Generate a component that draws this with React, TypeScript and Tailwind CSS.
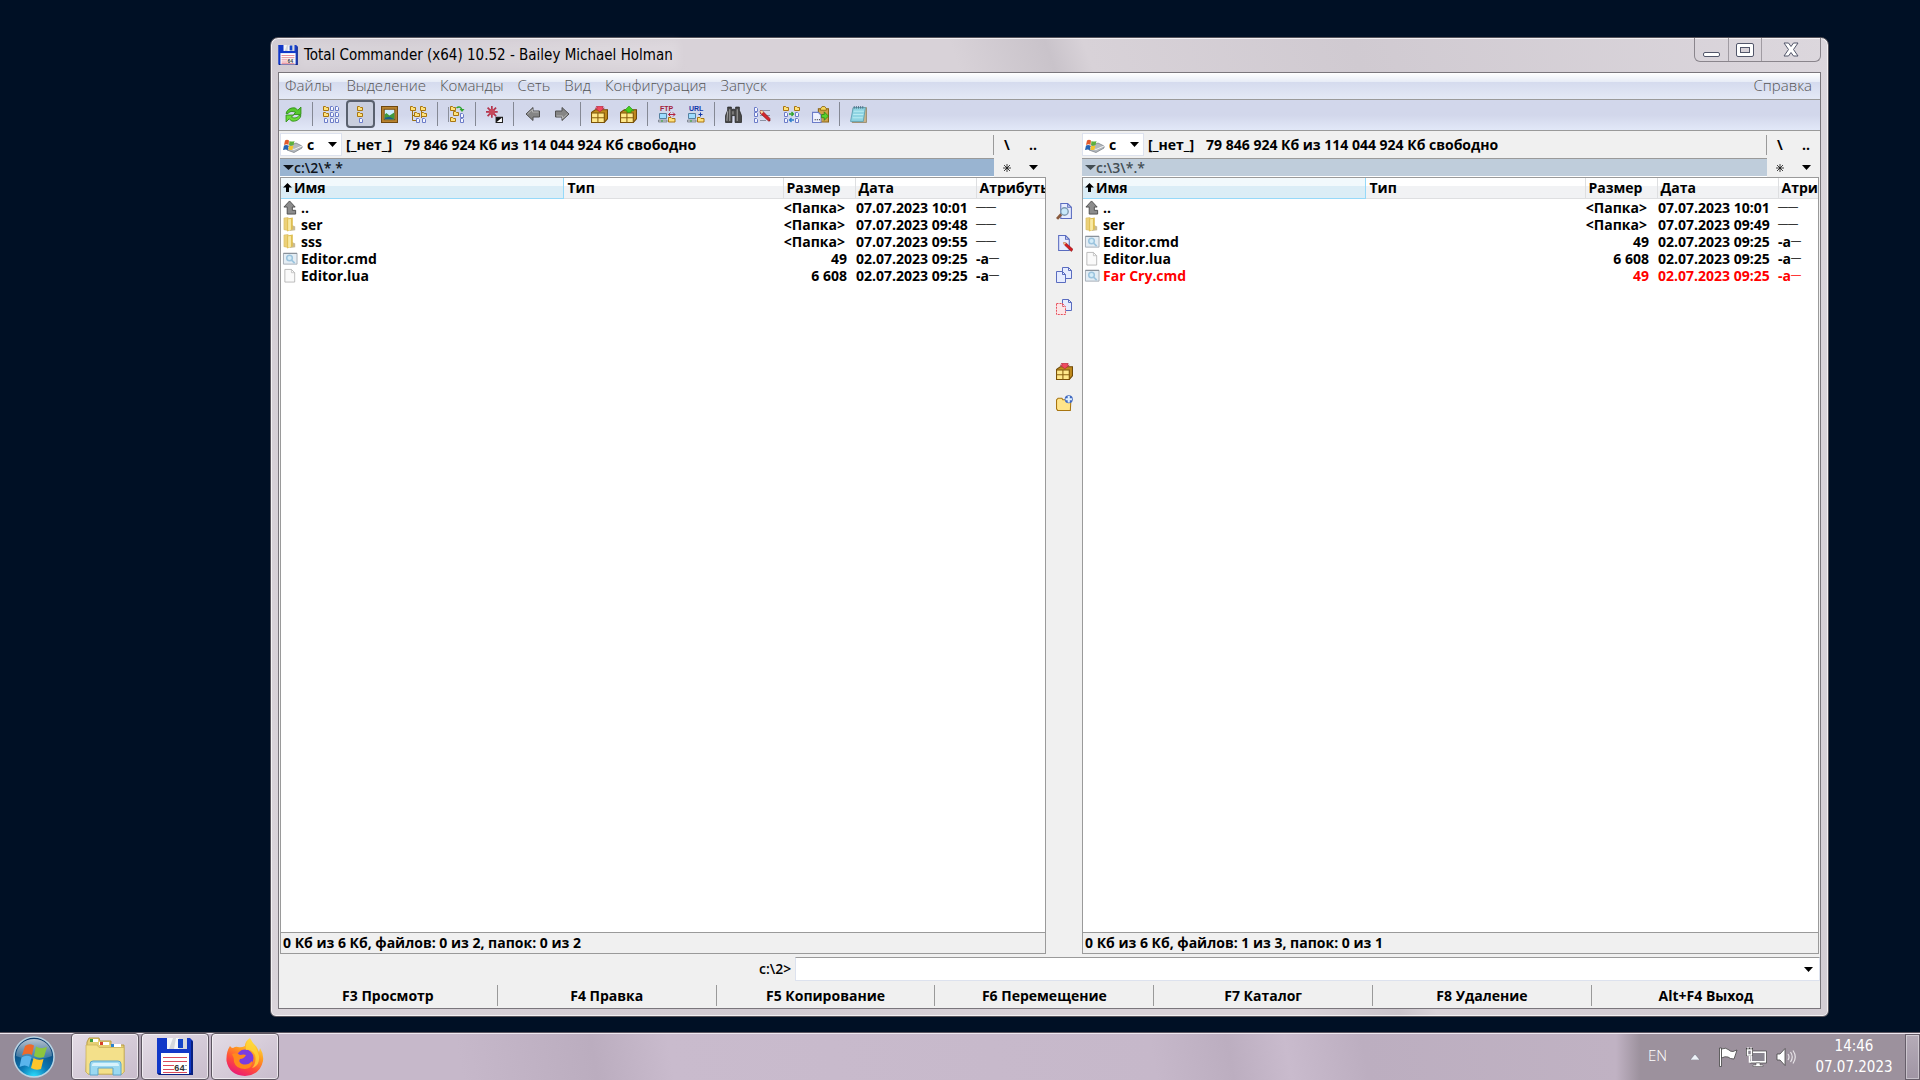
import type { ReactNode } from "react";

type FileRow = {
  icon: "up" | "folder" | "cmd" | "file";
  name: string;
  size: string;
  date: string;
  archive?: boolean;
  selected?: boolean;
};

const leftFiles: FileRow[] = [
  { icon: "up", name: "..", size: "<Папка>", date: "07.07.2023 10:01" },
  { icon: "folder", name: "ser", size: "<Папка>", date: "07.07.2023 09:48" },
  { icon: "folder", name: "sss", size: "<Папка>", date: "07.07.2023 09:55" },
  { icon: "cmd", name: "Editor.cmd", size: "49", date: "02.07.2023 09:25", archive: true },
  { icon: "file", name: "Editor.lua", size: "6 608", date: "02.07.2023 09:25", archive: true },
];

const rightFiles: FileRow[] = [
  { icon: "up", name: "..", size: "<Папка>", date: "07.07.2023 10:01" },
  { icon: "folder", name: "ser", size: "<Папка>", date: "07.07.2023 09:49" },
  { icon: "cmd", name: "Editor.cmd", size: "49", date: "02.07.2023 09:25", archive: true },
  { icon: "file", name: "Editor.lua", size: "6 608", date: "02.07.2023 09:25", archive: true },
  { icon: "cmd", name: "Far Cry.cmd", size: "49", date: "02.07.2023 09:25", archive: true, selected: true },
];

const menuItems = ["Файлы", "Выделение", "Команды", "Сеть", "Вид", "Конфигурация", "Запуск"];

const functionKeys = [
  "F3 Просмотр",
  "F4 Правка",
  "F5 Копирование",
  "F6 Перемещение",
  "F7 Каталог",
  "F8 Удаление",
  "Alt+F4 Выход",
];

const Svg = ({ children, className = "size-4", box = "0 0 16 16" }: { children: ReactNode; className?: string; box?: string }) => (
  <svg viewBox={box} className={`${className} shrink-0`} fill="none" aria-hidden="true">
    {children}
  </svg>
);

const Floppy = ({ className }: { className: string }) => (
  <Svg className={className} box="0 0 36 37">
    <path d="M0 0H33L36 3V37H2L0 35Z" fill="#1238c8" />
    <path d="M0 35L2 37H36V4L34 2V35Z" fill="#0a2080" />
    <path d="M10 0H30V11H10Z" fill="#d5d7dc" />
    <path d="M10 0H16L12 11H10ZM19 0H22V11H17Z" fill="#f5f6f8" />
    <path d="M21 1H26V10H21Z" fill="#1444c8" />
    <path d="M4 15H32V36H4Z" fill="#fff" />
    <path d="M6 19.500H30M6 23.500H30M6 27.500H17M6 31.500H17M6 34.500H30" stroke="#d94a5c" strokeWidth="1.200" />
    <text x="17" y="33" fontSize="9" fontWeight="700" fontFamily="Liberation Mono, monospace" fill="#333">64</text>
    <path d="M29 27V28M29 31V32" stroke="#333" strokeWidth="1" />
  </Svg>
);

// little folder and page glyphs shared by the toolbar icons
const F = ({ x, y }: { x: number; y: number }) => (
  <path d={`M${x} ${y}h2l1 1h2v3h-5z`} fill="#ffe27a" stroke="#a87510" />
);
const P = ({ x, y }: { x: number; y: number }) => (
  <path d={`M${x} ${y}h2l1 1v3h-3z`} fill="#f4f6ff" stroke="#6c7cc8" />
);

const RefreshIcon = () => (
  <Svg className="size-[17px]">
    <path d="M1 7C2 3 6 1 10 2L12 4L15 1V8H8L10 6C7 4.500 4 5 3 7Z" fill="#55c82c" stroke="#2c8a14" strokeWidth=".8" />
    <path d="M15 9C14 13 10 15 6 14L4 12L1 15V8.500H8L6 10.500C9 12 12 11 13 9Z" fill="#6bdc38" stroke="#2c8a14" strokeWidth=".8" />
  </Svg>
);
const BriefIcon = () => (
  <Svg className="size-[17px]" box="0 0 17 17">
    <F x={0.5} y={0.5} />
    <F x={0.5} y={6.5} />
    <P x={1.5} y={12.5} />
    <P x={7.5} y={0.5} /><P x={7.5} y={6.5} /><P x={7.5} y={12.5} />
    <P x={12.5} y={0.5} /><P x={12.5} y={6.5} /><P x={12.5} y={12.5} />
  </Svg>
);
const FullIcon = () => (
  <Svg className="size-[17px]" box="0 0 17 17">
    <F x={5.5} y={0.5} />
    <F x={5.5} y={6.5} />
    <P x={7.5} y={12.5} />
  </Svg>
);
const ThumbsIcon = () => (
  <Svg className="size-[17px]">
    <path d="M.5 .5H15.500V15.500H.5Z" fill="#b98430" stroke="#6f4810" />
    <path d="M3 3H13V13H3Z" fill="#cdeeff" stroke="#7d5214" />
    <path d="M3.500 8L5 6.500L8 9L12.500 6V12.500H3.500Z" fill="#3f9a3c" />
    <path d="M3.500 11L8 10L12.500 12.500H3.500Z" fill="#1a5f8c" />
  </Svg>
);
const TreeIcon = () => (
  <Svg className="size-[17px]" box="0 0 17 17">
    <path d="M2.500 4V14.500H6M11.500 4V12M2.500 9.500H6" stroke="#9a7010" />
    <F x={0.5} y={0.5} />
    <F x={10.5} y={0.5} />
    <F x={4.5} y={6.5} />
    <F x={11.5} y={6.5} />
    <P x={6.5} y={12.5} />
    <P x={12.5} y={12.5} />
  </Svg>
);
const BranchIcon = () => (
  <Svg className="size-[17px]" box="0 0 17 17">
    <path d="M.5 1V16" stroke="#8a8f9c" />
    <F x={2.5} y={0.5} />
    <F x={5.5} y={5.5} />
    <F x={2.5} y={11.5} />
    <P x={12.5} y={7.5} /><P x={12.5} y={12.5} />
    <path d="M8.500 2C11 0 13 1 14 4" stroke="#2fa32c" strokeWidth="1.500" />
    <path d="M11.500 3H16.500L14 6Z" fill="#2fa32c" />
  </Svg>
);
const SelectIcon = () => (
  <Svg className="size-[17px]">
    <path d="M5.500 0V11M0 5.500H11M1.500 1.500L9.500 9.500M9.500 1.500L1.500 9.500" stroke="#b4344c" strokeWidth="1.600" />
    <circle cx="5.500" cy="5.500" r="3" fill="#c4485c" />
    <path d="M9.500 10.500H15.500V15.500H9.500Z" fill="#fff" stroke="#222" />
    <path d="M9.500 15.500V10.500H15.500Z" fill="#111" />
  </Svg>
);
const BackIcon = ({ flip = false }) => (
  <Svg className={flip ? "size-4 rotate-180" : "size-4"}>
    <path d="M1 8L8 1.500V5H14.500V11H8V14.500Z" fill="#858585" stroke="#505050" />
    <path d="M2.500 8L7.500 3.500V6H13.500" stroke="#b4b4b4" />
  </Svg>
);
const PackIcon = ({ up = false }) => (
  <Svg className="size-[17px]">
    <path d="M.5 6L4 3.500H15.500V12L12.500 15.500H.5Z" fill="#c08a1c" stroke="#6f4a08" />
    <path d="M.5 6.500H12.500V15.500H.5Z" fill="#ffe88a" stroke="#7a5208" />
    <path d="M6.500 6.500V15.500M.5 11H12.500" stroke="#8a6010" />
    {up ? (
      <path d="M4 4.500L8.500 0L13 4.500H10.500V6H6.500V4.500Z" fill="#44d020" stroke="#2a8c12" strokeWidth=".6" />
    ) : (
      <path d="M5 .3H11.500L10.500 2H12.500L8.300 5.500L4 2H6Z" fill="#f04a5e" stroke="#b0203a" strokeWidth=".6" />
    )}
  </Svg>
);
const NetIcon = ({ label }: { label: string }) => (
  <Svg className="size-[18px]" box="0 0 18 18">
    <text x="2" y="6" fontSize="7" fontWeight="700" fontFamily="Liberation Sans, sans-serif" fill={label === "FTP" ? "#a3203c" : "#1238a8"}>
      {label}
    </text>
    <path d="M1.500 8.500H8.500V13.500H1.500Z" fill="#9fdcff" stroke="#5580a0" />
    <path d="M.5 15H9V17H.5Z" fill="#c9ced6" stroke="#68707c" strokeWidth=".7" />
    <path d="M3 16H5" stroke="#2fa32c" />
    <path d="M10.500 12.500H13L14 13.500H17V17H10.500Z" fill="#ffe07a" stroke="#a87510" />
    {label === "FTP" ? (
      <path d="M10.500 9.500H17M12.500 7.500L10.500 9.500L12.500 11.500M15 7.500L17 9.500L15 11.500" stroke="#b4203c" />
    ) : (
      <path d="M13.500 7.500V11.500M11.500 9.500H15.500" stroke="#1238a8" />
    )}
  </Svg>
);
const BinocularsIcon = () => (
  <Svg className="size-[17px]">
    <path d="M2.500 1H6V4H7V3H9V4H10V1H13.500V4L15.500 9V15.500H9.500V9H6.500V15.500H.5V9L2.500 4Z" fill="#4a4a4a" stroke="#222" strokeWidth=".7" />
    <path d="M2.500 5L1.800 14M4.500 3V14M11.500 3V14M7.500 5V8" stroke="#a0a0a0" />
  </Svg>
);
const RenameIcon = () => (
  <Svg className="size-[17px]" box="0 0 17 17">
    <P x={0.5} y={1.5} /><P x={0.5} y={6.5} /><P x={0.5} y={12.5} />
    <path d="M6 4.500H16M6 9.500H16M6 14.500H12" stroke="#8c93a4" />
    <path d="M6 5L8 4.500L16 12.500V15H14.500L6.500 7.500Z" fill="#d3262c" stroke="#7a1010" strokeWidth=".6" />
    <path d="M6 5L8 4.500L9.500 6L7.500 8Z" fill="#f3d9a0" />
  </Svg>
);
const SyncIcon = () => (
  <Svg className="size-[17px]" box="0 0 17 17">
    <F x={0.5} y={0.5} /><F x={11.5} y={0.5} />
    <P x={1.5} y={6.5} /><P x={12.5} y={6.5} />
    <P x={1.5} y={12.5} /><P x={12.5} y={12.5} />
    <path d="M6 8H10.500M8.500 6L10.500 8L8.500 10" stroke="#2fa32c" strokeWidth="1.300" />
    <path d="M11 14H6.500M8.500 12L6.500 14L8.500 16" stroke="#2c7ccc" strokeWidth="1.300" />
  </Svg>
);
const CopyNamesIcon = () => (
  <Svg className="size-[17px]">
    <path d="M6 2.500H15.500V15H6Z" fill="#cfa24a" stroke="#8a6414" />
    <path d="M8 2.500L9.500 .5H12L13.500 2.500V4H8Z" fill="#f4d75c" stroke="#8a6414" strokeWidth=".8" />
    <path d="M.5 6H6L8.500 8.500V15.500H.5Z" fill="#eef1ff" stroke="#6c7cc8" />
    <path d="M2.500 13H3.500M4.500 13H5.500M6.500 13H7.500" stroke="#222" />
    <path d="M9 8H11.500V5.500L15.500 9.500L11.500 13.500V11H9Z" fill="#58d22c" stroke="#2a8012" strokeWidth=".7" />
  </Svg>
);
const NotepadIcon = () => (
  <Svg className="size-[17px]">
    <path d="M3 2L15.500 1.500V15.500H2Z" fill="#c8b48a" stroke="#8c7c5a" strokeWidth=".7" />
    <path d="M3 1.500H14.500L12.500 14.500H.5Z" fill="#8fd4e2" stroke="#5a9fb2" strokeWidth=".8" />
    <path d="M3.500 5H13M3 8H12.500M2.500 11H12" stroke="#b8ebf2" />
    <path d="M4 0V2.500M6 0V2.500M8 0V2.500M10 0V2.500M12 0V2.500" stroke="#4a6a80" strokeWidth=".8" />
  </Svg>
);

const ViewIcon = () => (
  <Svg className="size-[17px]">
    <path d="M4.500 .5H11L14.500 4V14.500H4.500ZM11 .5V4H14.500" fill="#e6ecff" stroke="#5a6cc0" />
    <path d="M5 10.500L1 15" stroke="#8a5a3c" strokeWidth="2.600" />
    <circle cx="8" cy="8" r="3.500" fill="#c8e8fa" stroke="#7e9ab0" strokeWidth="1.300" />
  </Svg>
);
const EditIcon = () => (
  <Svg className="size-[17px]">
    <path d="M2.500 .5H9L12.500 4V14.500H2.500ZM9 .5V4H12.500" fill="#e6ecff" stroke="#5a6cc0" />
    <path d="M7 7L9.500 7.500L16 13.500L14.500 15.500L8 9.500Z" fill="#d31a20" stroke="#7a1010" strokeWidth=".5" />
    <path d="M6.500 6.500L9.500 7.500L8 9.500Z" fill="#f3c78a" />
  </Svg>
);
const CopyIcon = ({ move = false }) => (
  <Svg className="size-[17px]" box="0 0 17 17">
    <path d="M6.500 .5H12.500L15.500 3.500V11.500H6.500ZM12.500 .5V3.500H15.500" fill="#e6ecff" stroke="#5a6cc0" />
    <path
      d="M.5 4.500H6.500L9.500 7.500V15.500H.5ZM6.500 4.500V7.500H9.500"
      fill={move ? "#fbe6e8" : "#e6ecff"}
      stroke={move ? "#e8505c" : "#5a6cc0"}
      strokeDasharray={move ? "2 1" : undefined}
    />
  </Svg>
);
const NewFolderIcon = () => (
  <Svg className="size-[17px]">
    <path d="M.5 4.500L2 3H5.500L6.500 4.500H14L13.500 14.500H1.500L.5 13Z" fill="#ffe48a" stroke="#a87510" />
    <circle cx="12" cy="4" r="3.800" fill="#3f68c0" />
    <path d="M12 1V7M9 4H15" stroke="#dff0ff" strokeWidth="2" />
  </Svg>
);

const FileIcon = ({ kind }: { kind: FileRow["icon"] }) => {
  if (kind === "up")
    return (
      <Svg className="h-[15px] w-4">
        <path d="M1.500 7.500L7.500 1L13.500 7.500H10.500V11H14V15H5V7.500Z" fill="#8c8c8c" stroke="#4c4c4c" />
      </Svg>
    );
  if (kind === "folder")
    return (
      <Svg className="h-[15px] w-4">
        <path d="M9 8L13.500 10V14L8 15Z" fill="#c9bb94" />
        <path d="M1.500 1L6 .5V14.500L1.500 13.500Z" fill="#ecd078" stroke="#cdb25a" strokeWidth=".5" />
        <path d="M5 1.500L11 .5V13L5 15.500Z" fill="#dfbf52" />
        <path d="M6 2.500L9 2V13.500L6 14.500Z" fill="#f8e9a4" />
      </Svg>
    );
  if (kind === "cmd")
    return (
      <Svg className="h-[15px] w-4">
        <path d="M1 2.500H15.500V14H1Z" fill="#e4edf4" stroke="#a4acb4" />
        <path d="M1 2.500H15.500" stroke="#7e8890" />
        <circle cx="7.500" cy="7.500" r="3" fill="#d4ecf8" stroke="#9cc4de" strokeWidth="1.600" />
        <path d="M10 10L13 13" stroke="#9cc4de" strokeWidth="1.800" />
      </Svg>
    );
  return (
    <Svg className="h-[15px] w-4">
      <path d="M2.500 1.500H9.500L13 5V15H2.500Z" fill="#fafafa" stroke="#a8a8a8" strokeWidth=".8" />
      <path d="M9.500 1.500V5H13" stroke="#b8b8b8" strokeWidth=".8" />
    </Svg>
  );
};

const DownArrow = ({ className = "w-[9px]" }) => (
  <svg viewBox="0 0 9 5" preserveAspectRatio="none" className={`${className} h-[5px] shrink-0`} aria-hidden="true">
    <path d="M0 0H9L4.500 5Z" fill="currentColor" />
  </svg>
);

const ToolButton = ({ label, pressed = false, children }: { label: string; pressed?: boolean; children: ReactNode }) => (
  <button
    type="button"
    aria-label={label}
    className={`flex h-7 w-[29px] shrink-0 items-center justify-center ${
      pressed ? "rounded-sm border-2 border-[#59606e] bg-[#c9cede]" : ""
    }`}
  >
    {children}
  </button>
);

const Separator = () => <span className="mx-1 h-6 w-px shrink-0 bg-[#848894]" />;

const Toolbar = () => (
  <div className="flex h-[31px] shrink-0 items-center border-b border-[#9a9a9a] bg-linear-to-b from-[#d2d7eb] from-50% to-[#e2e8f8] pb-0.5">
    <ToolButton label="Обновить"><RefreshIcon /></ToolButton>
    <Separator />
    <ToolButton label="Краткий"><BriefIcon /></ToolButton>
    <ToolButton label="Подробный" pressed><FullIcon /></ToolButton>
    <ToolButton label="Эскизы"><ThumbsIcon /></ToolButton>
    <ToolButton label="Дерево"><TreeIcon /></ToolButton>
    <Separator />
    <ToolButton label="Все файлы"><BranchIcon /></ToolButton>
    <Separator />
    <ToolButton label="Инвертировать выделение"><SelectIcon /></ToolButton>
    <Separator />
    <ToolButton label="Назад"><BackIcon /></ToolButton>
    <ToolButton label="Вперёд"><BackIcon flip /></ToolButton>
    <Separator />
    <ToolButton label="Упаковать"><PackIcon /></ToolButton>
    <ToolButton label="Распаковать"><PackIcon up /></ToolButton>
    <Separator />
    <ToolButton label="Соединиться с FTP"><NetIcon label="FTP" /></ToolButton>
    <ToolButton label="Новое соединение"><NetIcon label="URL" /></ToolButton>
    <Separator />
    <ToolButton label="Поиск"><BinocularsIcon /></ToolButton>
    <ToolButton label="Групповое переименование"><RenameIcon /></ToolButton>
    <ToolButton label="Синхронизация"><SyncIcon /></ToolButton>
    <ToolButton label="Копировать имена"><CopyNamesIcon /></ToolButton>
    <Separator />
    <ToolButton label="Блокнот"><NotepadIcon /></ToolButton>
  </div>
);

const Attributes = ({ archive = false }) => (
  <span className="flex h-[17px] items-center">
    {archive ? "-a" : null}
    <span className="font-['Liberation_Sans',sans-serif] text-[10px] leading-none font-normal">{archive ? "—" : "——"}</span>
  </span>
);

type PanelProps = {
  id: string;
  path: string;
  files: FileRow[];
  status: string;
  active?: boolean;
};

const FilePanel = ({ id, path, files, status, active = false }: PanelProps) => (
  <section className="flex min-w-0 flex-col">
    <div className="flex h-[27px] shrink-0 items-center">
      <div className="flex h-[23px] w-[62px] shrink-0 items-center border border-[#dde2ee] bg-white pr-1 pl-0.5">
        <Svg className="h-4 w-[20px]" box="0 0 20 16">
          <path d="M4 10L13 6L19 9V11L11 15.500L4 13Z" fill="#b4b9be" stroke="#7e848a" strokeWidth=".8" />
          <path d="M4 10L11 12.500L19 9" stroke="#f2f2f2" />
          <path d="M2 3.500Q4 2 6 3.500L5.500 8Q4 6.500 1 8Z" fill="#e05a2c" />
          <path d="M6.500 4Q9 5 11.500 4L10.500 8Q8 9 6 8Z" fill="#5cb03c" />
          <path d="M1 8.500Q3 7.500 5.500 8.500L5 13Q3 12 0 13Z" fill="#2464b4" />
          <path d="M6 8.500Q8 9.500 10.500 8.500L9.500 12.500Q7 13.500 5.500 12.500Z" fill="#f3c430" />
        </Svg>
        <select id={`${id}-drive`} aria-label="Диск" defaultValue="c" className="h-5 min-w-0 flex-1 appearance-none bg-transparent pl-1 leading-5 font-bold outline-none">
          <option value="c">c</option>
        </select>
        <DownArrow />
      </div>
      <p className="ml-1 flex flex-1 gap-3 whitespace-nowrap">
        <span>[_нет_]</span>
        <span>79 846 924 Кб из 114 044 924 Кб свободно</span>
      </p>
      <div className="flex h-5 w-[53px] shrink-0 border-l border-[#9a9a9a] leading-5">
        <button type="button" className="flex-1">\</button>
        <button type="button" className="flex-1">..</button>
      </div>
    </div>
    <div className="flex h-[19px] shrink-0 items-center">
      <button
        type="button"
        className={`flex h-full min-w-0 flex-1 items-center border-t border-b border-t-[#9a9a9a] border-b-white pl-[3px] text-left leading-4 ${
          active ? "bg-[#99b4d1] text-[#10151c]" : "bg-[#bfcddb] text-[#434e54]"
        }`}
      >
        <DownArrow className="w-[11px]" />
        <span className="font-semibold">{path}</span>
      </button>
      <div className="flex w-[52px] shrink-0 items-center">
        <button type="button" aria-label="Избранные каталоги" className="flex flex-1 justify-center">
          <Svg className="size-2" box="0 0 8 8">
            <path d="M4 0V8M0 4H8M1 1L7 7M7 1L1 7" stroke="#111" strokeWidth=".8" />
          </Svg>
        </button>
        <button type="button" aria-label="История каталогов" className="flex flex-1 justify-center">
          <DownArrow />
        </button>
      </div>
    </div>
    <div className="flex min-h-0 flex-1 flex-col border border-[#9a9a9a] bg-white">
      <div className="min-h-0 flex-1 overflow-hidden">
        <table className="w-full table-fixed border-collapse">
          <colgroup>
            <col className="w-[282px]" />
            <col className="w-[220px]" />
            <col className="w-[72px]" />
            <col className="w-[121px]" />
            <col />
          </colgroup>
          <thead>
            <tr className="h-5 bg-linear-to-b from-white from-40% to-[#f1f2f4] to-40% text-left leading-[18px]">
              <th className="border-r border-b border-[#96d9f9] bg-linear-to-b from-[#f2f9fc] from-40% to-[#dbedf6] to-40% p-0">
                <span className="flex items-center pl-0.5">
                  <Svg className="mr-0.5 size-[9px]" box="0 0 9 9">
                    <path d="M4.500 0L9 4.500H6V9H3V4.500H0Z" fill="#000" />
                  </Svg>
                  Имя
                </span>
              </th>
              <th className="border-r border-b border-[#dedfe1] p-0 pl-1">Тип</th>
              <th className="border-r border-b border-[#dedfe1] p-0 pl-[3px]">Размер</th>
              <th className="border-r border-b border-[#dedfe1] p-0 pl-[3px]">Дата</th>
              <th className="overflow-hidden border-b border-[#dedfe1] p-0 pl-[3px]">Атрибуты</th>
            </tr>
          </thead>
          <tbody>
            {files.map((file) => (
              <tr key={file.name} className={`h-[17px] leading-[17px] ${file.selected ? "text-[#ff0000]" : ""}`}>
                <td className="p-0">
                  <span className="flex h-[17px] items-center gap-[3px] pl-px">
                    <FileIcon kind={file.icon} />
                    {file.name}
                  </span>
                </td>
                <td className="p-0" />
                <td className={`p-0 text-right ${file.icon === "up" || file.icon === "folder" ? "pr-2.5" : "pr-2"}`}>{file.size}</td>
                <td className="p-0 pl-px">{file.date}</td>
                <td className="p-0 whitespace-nowrap">
                  <Attributes archive={file.archive} />
                </td>
              </tr>
            ))}
          </tbody>
        </table>
      </div>
      <p className="h-[21px] shrink-0 truncate border-t border-[#9a9a9a] bg-[#f0f0f0] pl-0.5 leading-[19px]">{status}</p>
    </div>
  </section>
);

const SideBar = () => (
  <nav className="flex flex-col items-center pt-16">
    {[
      { label: "Просмотр", icon: <ViewIcon /> },
      { label: "Правка", icon: <EditIcon /> },
      { label: "Копирование", icon: <CopyIcon /> },
      { label: "Перемещение", icon: <CopyIcon move /> },
      null,
      { label: "Упаковать", icon: <PackIcon /> },
      { label: "Каталог", icon: <NewFolderIcon /> },
    ].map((item, i) =>
      item ? (
        <button key={i} type="button" aria-label={item.label} className="flex size-8 items-center justify-center">
          {item.icon}
        </button>
      ) : (
        <span key={i} className="h-8" />
      )
    )}
  </nav>
);

const TitleBar = () => (
  <header className="flex h-[34px] shrink-0 items-start justify-between">
    <div className="flex h-[34px] items-center gap-1.5">
      <Floppy className="h-5 w-5" />
      <h1 className="bg-white/15 font-['DejaVu_Sans_Condensed','DejaVu_Sans',sans-serif] text-[15px] leading-4 font-normal text-black shadow-[0_0_8px_6px_rgba(255,255,255,0.15)]">
        Total Commander (x64) 10.52 - Bailey Michael Holman
      </h1>
    </div>
    <div className="flex h-6 overflow-hidden rounded-b-md border border-t-0 border-[#8a858c]">
      <button type="button" aria-label="Свернуть" className="flex w-[34px] items-end justify-center border-r border-[#a09ba2] pb-1">
        <span className="h-[5px] w-[17px] rounded-xs border border-[#52566a] bg-white" />
      </button>
      <button type="button" aria-label="Развернуть" className="flex w-[33px] items-center justify-center border-r border-[#a09ba2]">
        <span className="flex h-[14px] w-[18px] items-center justify-center rounded-xs border border-[#52566a] bg-white">
          <span className="h-1.5 w-2.5 border border-[#52566a] bg-[#d8d2d8]" />
        </span>
      </button>
      <button type="button" aria-label="Закрыть" className="flex w-[58px] items-center justify-center">
        <Svg className="h-[15px] w-4" box="0 0 16 15">
          <path d="M1 1H5.500L8 4.500L10.500 1H15L10.500 7.500L15 14H10.500L8 10.500L5.500 14H1L5.500 7.500Z" fill="#fff" stroke="#52566a" strokeLinejoin="round" />
        </Svg>
      </button>
    </div>
  </header>
);

const MenuBar = () => (
  <nav className="flex h-[27px] shrink-0 items-center gap-3.5 border-b border-[#9a9a9a] bg-[linear-gradient(#ffffff,#e6ebf6_36%,#d5dbee_36%,#e4e9f6)] px-1.5 font-['Open_Sans',sans-serif] text-[15px] font-light text-[#555]">
    {menuItems.map((item) => (
      <button key={item} type="button">{item}</button>
    ))}
    <button type="button" className="mr-0.5 ml-auto">Справка</button>
  </nav>
);

const StartOrb = () => (
  <Svg className="size-[42px]" box="0 0 42 42">
    <defs>
      <radialGradient id="orb" cx=".5" cy="1" r=".9">
        <stop offset="0" stopColor="#2ce0ff" />
        <stop offset=".4" stopColor="#0c78b4" />
        <stop offset="1" stopColor="#0c3c6c" />
      </radialGradient>
      <linearGradient id="shine" x1="0" y1="0" x2="0" y2="1">
        <stop offset="0" stopColor="#fff" stopOpacity=".7" />
        <stop offset="1" stopColor="#fff" stopOpacity=".15" />
      </linearGradient>
    </defs>
    <circle cx="21" cy="21" r="20" fill="url(#orb)" stroke="#b8d4e4" strokeWidth="1.500" />
    <path d="M3 20C3 10 11 3 21 3S39 10 39 20C30 24 12 24 3 20Z" fill="url(#shine)" />
    <path d="M12 10Q16 7 21 9.500L19 19Q14 16.500 9 19.500Z" fill="#ee6a2a" />
    <path d="M23 10.500Q28 13.500 34 11L31 21Q26 23 21 20Z" fill="#8cc63e" />
    <path d="M8.500 21.500Q13 18.500 18.500 21L16 31Q12 28 6.500 31Z" fill="#5ab4ec" />
    <path d="M20.500 22Q25 25 30.500 23L28 33Q23 35 18 32Z" fill="#fcc52c" />
  </Svg>
);

const ExplorerIcon = () => (
  <Svg className="h-[39px] w-[41px]" box="0 0 41 39">
    <path d="M2 5L4 1H14L15 4H26V8H39V35L37 37H3L1 35Z" fill="#e5cf72" stroke="#b89c44" />
    <path d="M5 2H13V5H5ZM14 5H24V8H14ZM26 7H36V10H26Z" fill="#fff" />
    <path d="M5 2H8V5H5Z" fill="#3c9c3c" />
    <path d="M15 5H18V8H15Z" fill="#d8402c" />
    <path d="M26 7H29V10H26Z" fill="#2c84d0" />
    <path d="M1 8H12L14 10.500H39V35L37 37H3L1 35Z" fill="#f3e08a" stroke="#cdb45c" strokeWidth=".8" />
    <path d="M5 38V27Q5 24 8 24H33Q36 24 36 27V38H28V31H13V38Z" fill="#9bd8f0" stroke="#5aa4cc" />
    <path d="M7 28Q7 26 9 26H32Q34 26 34 29H7Z" fill="#d8f2fc" />
  </Svg>
);

const FirefoxIcon = () => (
  <Svg className="size-[40px]" box="0 0 40 40">
    <defs>
      <linearGradient id="fox" x1=".8" y1="0" x2=".3" y2="1">
        <stop offset="0" stopColor="#fff04a" />
        <stop offset=".4" stopColor="#ff9a1e" />
        <stop offset=".7" stopColor="#ff4a3c" />
        <stop offset="1" stopColor="#e8187a" />
      </linearGradient>
    </defs>
    <path d="M5 9Q6 11 8 11Q11 9 13 10Q16 11 20 9Q20 4 25 1Q27 6 31 9Q33 12 34 15L35 11Q39 17 38 24Q35 38 20 39Q4 38 1.500 24Q1 15 5 9Z" fill="url(#fox)" />
    <circle cx="20" cy="21" r="8.500" fill="#7a3ce0" />
    <path d="M7 17Q12 15 15 18Q19 17 21 18Q19 22 15 22Q13 25 17 27Q23 29 27 24Q28 31 20 32Q11 32 9 25Q9 20 7 17Z" fill="#ff8a1c" />
    <path d="M21 13Q27 12 30 18Q32 25 27 31Q35 29 34 19Q31 9 25 2Q20 5 21 13Z" fill="#ffd83a" opacity=".75" />
  </Svg>
);

const TaskButton = ({ label, children }: { label: string; children: ReactNode }) => (
  <button
    type="button"
    aria-label={label}
    className="flex h-[47px] w-[68px] items-center justify-center rounded-sm border border-[#5c5560] bg-linear-to-br from-[#e4dce6] to-[#c8bccc] inset-ring inset-ring-white/60"
  >
    {children}
  </button>
);

const TaskBar = () => (
  <footer className="flex h-12 shrink-0 items-center justify-between border-t border-[#5a5560] bg-[linear-gradient(80deg,#958b99_4%,#c6b8ca_12%,#c6b8ca_24%,#bbadbf_31%,#c9bbcd_35%,#c6b8ca_60%,#bcaec0_64%,#c9bbcd_67%,#bcaec0_71%,#c0b2c3_84%)] shadow-[inset_0_1px_0_#eee8f0]">
    <div className="flex items-center">
      <button type="button" aria-label="Пуск" className="mr-1 flex w-[67px] justify-center">
        <StartOrb />
      </button>
      <div className="flex gap-0.5">
        <TaskButton label="Проводник"><ExplorerIcon /></TaskButton>
        <TaskButton label="Total Commander"><Floppy className="h-[37px] w-9" /></TaskButton>
        <TaskButton label="Firefox"><FirefoxIcon /></TaskButton>
      </div>
    </div>
    <div className="mt-px flex h-[46px] items-center bg-linear-to-r from-transparent to-[#9c919d] to-8% pl-8 font-['DejaVu_Sans_Condensed','DejaVu_Sans',sans-serif] text-white">
      <button type="button" className="mb-1 font-['Open_Sans',sans-serif] text-[15px] font-light">EN</button>
      <button type="button" aria-label="Скрытые значки" className="ml-5 flex w-4 justify-center">
        <Svg className="h-1.5 w-2.5" box="0 0 10 6">
          <path d="M0 6L5 0L10 6Z" fill="#eef2f8" stroke="#667" strokeWidth=".5" />
        </Svg>
      </button>
      <Svg className="ml-2.5 h-5 w-[26px]" box="0 0 26 20">
        <path d="M6.500 1V19.500H8.500V1Z" fill="#fff" stroke="#444" strokeWidth=".8" />
        <path d="M8.500 2Q13 0 16 3Q17 4.500 20 4.500L24 3L21 12Q17 12 15 10Q12 9 8.500 11Z" fill="#fff" stroke="#444" strokeWidth=".8" />
      </Svg>
      <Svg className="ml-1.5 h-5 w-[22px]" box="0 0 22 20">
        <path d="M6 5H20.500V15H6Z" fill="#8a8690" stroke="#fff" strokeWidth="1.800" />
        <path d="M5 4H21.500V16H5Z" stroke="#444" strokeWidth=".7" />
        <path d="M11 16V18H8V19.500H18V18H15V16Z" fill="#fff" stroke="#444" strokeWidth=".5" />
        <path d="M1 1H8V9H1Z" fill="#444" />
        <path d="M2.500 3H6.500V8H2.500ZM4.500 9V15H6" fill="#8a8690" stroke="#fff" strokeWidth="1.500" />
        <path d="M3 0V2M6 0V2" stroke="#fff" />
      </Svg>
      <Svg className="ml-2 h-5 w-[22px]" box="0 0 22 20">
        <path d="M2 7H5L10 1.500V18.500L5 13H2Z" fill="#fff" stroke="#444" strokeWidth=".8" />
        <path d="M13 7Q15 10 13 13M15.500 5Q19 10 15.500 15M18 3.500Q22.500 10 18 16.500" stroke="#e8e4e8" strokeWidth="1.200" />
      </Svg>
      <time className="ml-[18px] w-[78px] text-center text-[15px] leading-[21px]">
        14:46
        <br />
        07.07.2023
      </time>
      <button
        type="button"
        aria-label="Свернуть все окна"
        className="ml-3 h-[46px] w-[15px] border border-[#665e6a] bg-linear-to-b from-[#b5abb8] to-[#a095a4] inset-ring inset-ring-white/40"
      />
    </div>
  </footer>
);

export default function App() {
  return (
    <div className="flex h-screen flex-col bg-[#001025]">
      <main className="flex min-h-0 flex-1 pt-[37px] pr-[91px] pb-[15px] pl-[270px]">
        <div className="flex min-w-0 flex-1 flex-col rounded-t-lg rounded-b-md border border-[#55525a] bg-[linear-gradient(70deg,#dad4da,#d0cad1_25%,#d8d2d8_40%,#d8d2d8_54%,#c9c3ca_59%,#d8d2d8_61%,#d0cad1_75%,#dcd7dd)] px-[7px] pb-[7px] inset-ring inset-ring-white/70">
          <TitleBar />
          <div className="flex min-h-0 flex-1 flex-col border border-[#7a767c] bg-[#f0f0f0] font-['Open_Sans','Noto_Sans',sans-serif] text-sm font-bold text-black">
            <MenuBar />
            <Toolbar />
            <div className="grid min-h-0 flex-1 grid-cols-[766fr_36px_737fr] px-px">
              <FilePanel id="left" path="c:\2\*.*" files={leftFiles} status="0 Кб из 6 Кб, файлов: 0 из 2, папок: 0 из 2" active />
              <SideBar />
              <FilePanel id="right" path="c:\3\*.*" files={rightFiles} status="0 Кб из 6 Кб, файлов: 1 из 3, папок: 0 из 1" />
            </div>
            <div className="mt-[3px] flex h-6 shrink-0 items-center">
              <label htmlFor="command" className="w-[33.5%] pr-1 text-right font-semibold">c:\2&gt;</label>
              <div className="flex h-full flex-1 items-center border border-[#dde2ee] border-t-[#9a9a9a] bg-white pr-1.5">
                <input id="command" type="text" className="h-full min-w-0 flex-1 bg-transparent px-1 outline-none" />
                <DownArrow />
              </div>
            </div>
            <div className="mt-1 mb-0.5 flex h-[21px] shrink-0">
              {functionKeys.map((key, i) => (
                <button
                  key={key}
                  type="button"
                  className={`leading-5 ${i < functionKeys.length - 1 ? "w-[14.2%] border-r border-[#9a9a9a]" : "flex-1"}`}
                >
                  {key}
                </button>
              ))}
            </div>
          </div>
        </div>
      </main>
      <TaskBar />
    </div>
  );
}
